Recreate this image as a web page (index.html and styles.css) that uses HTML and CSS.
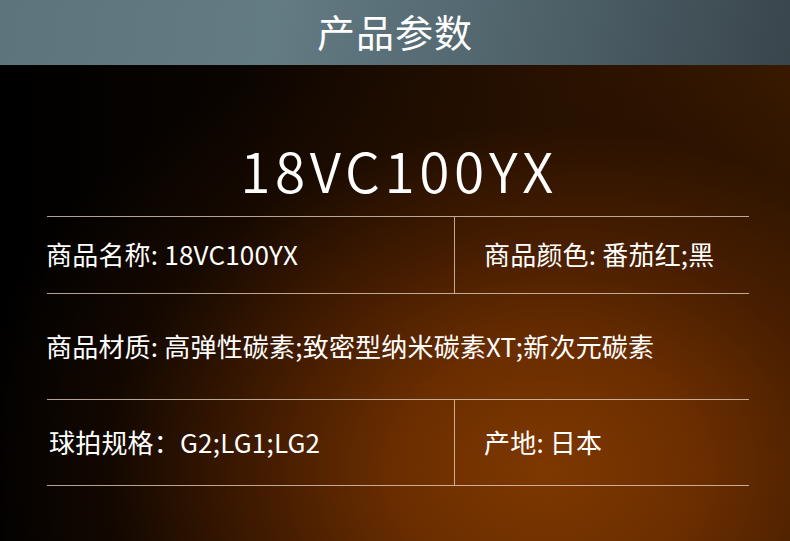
FILE: index.html
```html
<!DOCTYPE html>
<html lang="zh-CN">
<head>
<meta charset="utf-8">
<link rel="stylesheet" href="styles.css">
</head>
<body>
<div class="page">
  <header class="head">产品参数</header>
  <main class="body">
    <h1 class="model">18VC100YX</h1>
    <div class="table">
      <div class="row row-a">
        <div class="cell cell-left">商品名称: 18VC100YX</div>
        <div class="cell cell-right">商品颜色: 番茄红;黑</div>
      </div>
      <div class="row row-b">
        <div class="cell cell-full">商品材质: 高弹性碳素;致密型纳米碳素XT;新次元碳素</div>
      </div>
      <div class="row row-c">
        <div class="cell cell-left cell-spec">球拍规格：G2;LG1;LG2</div>
        <div class="cell cell-right">产地: 日本</div>
      </div>
    </div>
  </main>
</div>
</body>
</html>
```
FILE: styles.css
```css
html, body {
  margin: 0;
  padding: 0;
  background: #000;
}
.page {
  width: 790px;
  height: 541px;
  overflow: hidden;
  font-family: "Noto Sans CJK SC", "Noto Sans", sans-serif;
  color: #fff;
  display: flex;
  flex-direction: column;
}
.head {
  height: 65px;
  flex: none;
  background: linear-gradient(100deg, #5d747c 0%, #637b83 35%, #4d6068 70%, #3a454c 100%);
  display: flex;
  align-items: center;
  justify-content: center;
  font-size: 38px;
  line-height: 1;
  padding-bottom: 3px;
  box-sizing: border-box;
  letter-spacing: 1px;
}
.body {
  flex: 1;
  display: flex;
  flex-direction: column;
  background:
    radial-gradient(ellipse 580px 460px at 545px 405px, rgba(126,56,0,1) 0%, rgba(112,48,0,0.95) 25%, rgba(78,32,0,0.8) 50%, rgba(36,15,0,0.45) 75%, rgba(0,0,0,0) 100%),
    linear-gradient(90deg, #000 0%, #0a0400 30%, #2a1200 70%, #3a1a00 100%);
}
.model {
  margin: 67px 0 0 0;
  height: 75px;
  font-size: 55px;
  font-weight: 350;
  line-height: 75px;
  text-align: center;
  letter-spacing: 4.6px;
  padding-left: 8px;
}
.table {
  margin-left: 47px;
  width: 702px;
  margin-top: 9px;
}
.row {
  display: flex;
  font-size: 26px;
  line-height: 1;
  letter-spacing: 0.2px;
}
.row-a {
  height: 78px;
  border-top: 1px solid rgba(235, 215, 200, 0.75);
  border-bottom: 1px solid rgba(235, 215, 200, 0.75);
  box-sizing: border-box;
}
.row-b {
  height: 105px;
}
.row-c {
  height: 87px;
  border-top: 1px solid rgba(235, 215, 200, 0.75);
  border-bottom: 1px solid rgba(235, 215, 200, 0.75);
  box-sizing: border-box;
}
.cell {
  display: flex;
  align-items: center;
  padding-bottom: 2px;
  box-sizing: border-box;
}
.cell-left {
  width: 408px;
  margin-left: -1px;
}
.cell-right {
  flex: 1;
  border-left: 1px solid rgba(235, 215, 200, 0.75);
  padding-left: 29px;
}
.cell-full {
  margin-left: -1px;
}
.cell-spec {
  margin-left: 2px;
  width: 405px;
}
```
